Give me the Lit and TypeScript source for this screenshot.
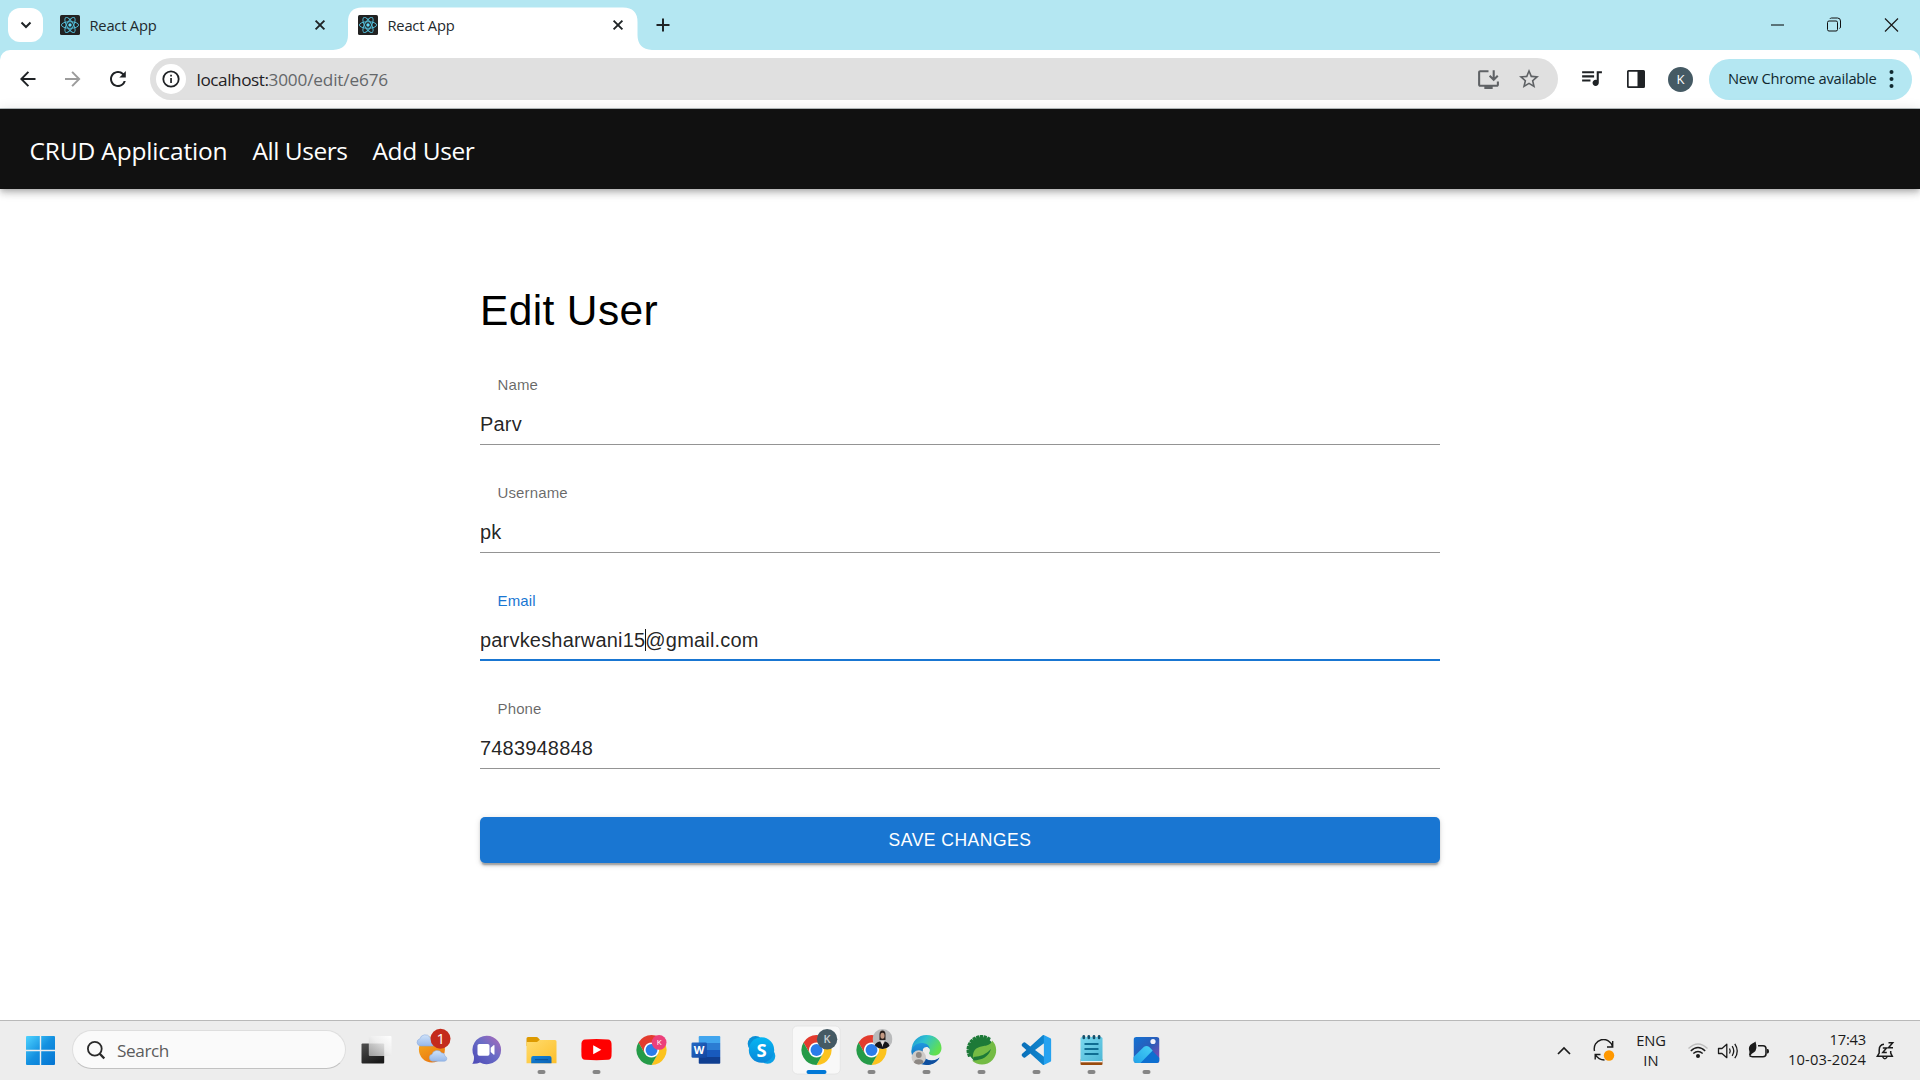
import { LitElement, html, svg, css } from "lit";
import { customElement, property } from "lit/decorators.js";

/** Text run that is tracked so that it fills a given width. */
@customElement("fit-text")
class FitText extends LitElement {
  static styles = css`
    :host { display: inline-block; white-space: nowrap; }
    .run { display: inline-block; white-space: pre; }
  `;
  @property({ type: Number }) w = 0;
  @property() text = "";
  firstUpdated() {
    const run = this.renderRoot.querySelector(".run") as HTMLElement;
    const natural = run.getBoundingClientRect().width;
    if (natural > 0 && this.w > 0) {
      run.style.letterSpacing = `${(this.w - natural) / this.text.length}px`;
    }
  }
  render() {
    return html`<span class="run">${this.text}</span>`;
  }
}

const t = (text: string, w: number) => html`<fit-text text=${text} w=${w}></fit-text>`;

const reactIcon = html`<svg class="fav" width="20" height="20" viewBox="-10 -10 20 20">
  <rect x="-10" y="-10" width="20" height="20" rx="1.6" fill="#222" />
  <g fill="none" stroke="#53bdd8" stroke-width="0.95">
    <ellipse rx="8.6" ry="3.3" />
    <ellipse rx="8.6" ry="3.3" transform="rotate(60)" />
    <ellipse rx="8.6" ry="3.3" transform="rotate(120)" />
  </g>
  <circle r="1.7" fill="#61dafb" />
</svg>`;

const closeIcon = html`<svg width="20" height="20" viewBox="-10 -10 20 20">
  <path d="M-4.4-4.4 4.4 4.4M4.4-4.4-4.4 4.4" stroke="#1f2426" stroke-width="1.9" />
</svg>`;

@customElement("browser-tab")
class BrowserTab extends LitElement {
  static styles = css`
    :host { display: block; }
    .tab { display: flex; align-items: center; width: 289px; height: 50px; box-sizing: border-box; padding: 0 9.5px 0 10px; position: relative; }
    .back { position: absolute; left: -15px; top: 7px; }
    .fav, .label, .close { position: relative; }
    .fav { display: block; }
    .label { flex: 1; margin-left: 9.5px; font-size: 14.7px; line-height: 50px; color: #1f2a2e; }
    .close { display: flex; }
  `;
  @property({ type: Boolean }) active = false;
  render() {
    return html`<div class="tab">
      ${this.active
        ? html`<svg class="back" width="319" height="44" viewBox="0 0 319 44">
            <path d="M0 44V43Q15 42 15 28V15Q15 .5 29 .5H290Q304.500 .5 304.500 15V28Q304.500 42 319 43V44Z" fill="#fff" />
          </svg>`
        : null}
      ${reactIcon}
      <span class="label">${t("React App", 67)}</span>
      <span class="close">${closeIcon}</span>
    </div>`;
  }
}

@customElement("text-field")
class TextField extends LitElement {
  static styles = css`
    :host { display: block; }
    .field { display: flex; flex-direction: column; box-sizing: border-box; height: 108px; padding-top: 38px; }
    .label { height: 20px; line-height: 20px; padding-left: 17.5px; font-size: 15px; letter-spacing: 0.14px; color: rgba(0, 0, 0, 0.6); }
    .value { flex: 1; margin-top: 14px; line-height: 30px; font-size: 20px; letter-spacing: 0.188px; color: rgba(0, 0, 0, 0.87); border-bottom: 1px solid #949494; }
    .focused .label { color: #1976d2; }
    .focused .value { border-bottom: 2px solid #1976d2; }
    .caret { display: inline-block; width: 1px; height: 22px; margin: 0 -0.5px; background: #111; vertical-align: -4px; }
  `;
  @property() label = "";
  @property() before = "";
  @property() after = "";
  @property({ type: Boolean }) focused = false;
  render() {
    return html`<div class="field ${this.focused ? "focused" : ""}">
      <div class="label">${this.label}</div>
      <div class="value">${this.before}${this.focused ? html`<span class="caret"></span>` : null}${this.after}</div>
    </div>`;
  }
}

const chromeLogo = svg`<g transform="translate(-15 -15) scale(.625)">
  <circle cx="24" cy="24" r="12" fill="#fff"/>
  <path fill="#e33b2e" d="M24,12H44.78a24,24,0,0,0-41.56,0L13.608,30l.009-.002A11.985,11.985,0,0,1,24,12Z"/>
  <circle cx="24" cy="24" r="9.5" fill="#2b7de9"/>
  <path fill="#fcc31e" d="M34.391,30.003,24,48A23.994,23.994,0,0,0,44.78,12.003H24l-.003.009A11.985,11.985,0,0,1,34.391,30.003Z"/>
  <path fill="#259b48" d="M13.609,30.003,3.218,12.006A23.994,23.994,0,0,0,24.003,48L34.393,30.003l-.007-.007a11.985,11.985,0,0,1-20.778.007Z"/>
</g>`;

const cloud = svg`<path d="M4 11A3.600 3.600 0 0 1 3.500 4 4.800 4.800 0 0 1 12.300 2.600 3.600 3.600 0 0 1 15.500 6 2.600 2.600 0 0 1 15 11Z" fill="url(#cloud)" stroke="#88a9dc" stroke-width=".5"/>`;

const gear = Array.from({ length: 10 }, (_, i) => svg`<rect x="-1.700" y="-15" width="3.400" height="5" rx=".6" transform=${`rotate(${-112 + i * 16})`} fill="#1d7a38"/>`);

interface Task { name: string; art: unknown; running?: boolean; active?: boolean; }

const tasks: Task[] = [
  { name: "tasks", art: svg`
    <rect x="-15" y="-6.500" width="22.700" height="20" rx="1" fill="url(#dark)"/>
    <rect x="-7.700" y="-14" width="22.700" height="20" rx="1" fill="url(#glass)"/>` },
  { name: "widgets", art: svg`
    <circle cx=".4" cy="-.5" r="13" fill="url(#sun)"/>
    <g transform="translate(-15.500 -15.500) scale(1.130 1.050)">${cloud}</g>
    <g transform="translate(-3.200 .2) scale(1.080 1)">${cloud}</g>
    <circle cx="9" cy="-11.300" r="10" fill="#c42b1c"/>
    <text x="9.300" y="-5.800" text-anchor="middle" font-size="15" fill="#fff">1</text>` },
  { name: "chat", art: svg`
    <path d="M.3-14.200A14.200 14.200 0 1 1-6.500 12.400Q-10 14.200-14.300 13.700-12.300 11.500-12.500 6.500A14.200 14.200 0 0 1 .3-14.200Z" fill="url(#chat)"/>
    <rect x="-9" y="-6" width="12" height="11.800" rx="1.800" fill="#fff"/>
    <path d="M4.200-2.300 7-4.800Q8-5.300 8-4.200V4Q8 5.100 7 4.500L4.200 2Z" fill="#fff"/>` },
  { name: "files", running: true, art: svg`
    <path d="M-15-11.500Q-15-13-13.500-13H-5Q-4-13-3.200-12L-1.500-10V-4H-15Z" fill="#dd9a00"/>
    <path d="M-15-8H-4.500L-2-10H13.500Q15-10 15-8.500V13.300H-15Z" fill="url(#folder)"/>
    <path d="M-10.300 13.300V8Q-10.300 6-8.300 6H8Q10 6 10 8V13.300Z" fill="url(#blue)"/>
    <rect x="-6.500" y="9.200" width="13" height="1" fill="#0a4f96"/>` },
  { name: "video", running: true, art: svg`
    <path d="M-15-6.500Q-14.700-10.200-11.500-10.500 0-11.400 11.500-10.500 14.700-10.200 15-6.500 15.300 0 15 6 14.700 9.500 11.500 9.800 0 10.700-11.500 9.800-14.700 9.500-15 6-15.300 0-15-6.500Z" fill="#f00"/>
    <path d="M-3.300-4.800 4.800-.3-3.300 4.200Z" fill="#fff"/>` },
  { name: "browser", art: svg`${chromeLogo}
    <circle cx="7.600" cy="-7.600" r="7.400" fill="#ec407a"/>
    <text x="7.600" y="-4.800" text-anchor="middle" font-size="8" fill="#fff">K</text>` },
  { name: "word", art: svg`
    <clipPath id="pg"><rect x="-8" y="-14" width="22" height="27.700" rx="1.300"/></clipPath>
    <g clip-path="url(#pg)">
      <rect x="-8" y="-14" width="22" height="7" fill="#41a5ee"/>
      <rect x="-8" y="-7" width="22" height="7" fill="#2b7cd3"/>
      <rect x="-8" y="0" width="22" height="7" fill="#185abd"/>
      <rect x="-8" y="7" width="22" height="7" fill="#103f91"/>
    </g>
    <rect x="-15" y="-7.600" width="15.400" height="15.400" rx="1.300" fill="url(#wd)"/>
    <text x="-7.400" y="4" text-anchor="middle" font-size="11" font-weight="700" fill="#fff">W</text>` },
  { name: "calls", art: svg`
    <circle cx="-6" cy="-6.300" r="7.800" fill="#0a8fd6"/>
    <circle cx="6" cy="6" r="7.800" fill="#0aa0e6"/>
    <circle r="12.700" fill="url(#sky)"/>
    <text x="0" y="6.700" text-anchor="middle" font-size="18.500" font-weight="700" fill="#fff">S</text>` },
  { name: "browser-k", running: true, active: true, art: svg`${chromeLogo}
    <circle cx="10.600" cy="-10.800" r="10.200" fill="#455a64"/>
    <text x="10.400" y="-6.900" text-anchor="middle" font-size="11" font-weight="600" fill="#c9d0d4">K</text>` },
  { name: "browser-p", running: true, art: svg`${chromeLogo}
    <clipPath id="ph"><circle cx="11" cy="-11" r="10"/></clipPath>
    <g clip-path="url(#ph)">
      <rect x="1" y="-21" width="20" height="20" fill="#b9babb"/>
      <path d="M8-10V-16Q8.200-19.500 11-19.500T14-16V-10Z" fill="#2a211e"/>
      <ellipse cx="11" cy="-14.300" rx="2.100" ry="3" fill="#c49a83"/>
      <path d="M3 0V-4Q4-8 8.500-8.500L11-5 13.500-8.500Q18-8 19 0Z" fill="#15161a"/>
      <path d="M9.500-9H12.500L11-3Z" fill="#e7dfdb"/>
    </g>` },
  { name: "edge", running: true, art: svg`
    <path d="M-15 1C-15-9-8-15 0-15 9-15 15-9 15-2 15 3 11.500 5.500 8 5.500 4 5.500 2.200 4 2.600 2.700 4.600.5 3-4-2-4-8-4-12-1-15 3Z" fill="url(#edgeTop)"/>
    <path d="M-15 2C-15-3-10.500-7-5-7-.5-7 3-5 3.200-1 1.500-4-2-3.500-3.500-1-6 3-3 10 5 10.500 8 10.500 11 9.500 13 7.500 10 13 5 15 0 15-8 15-15 9-15 2Z" fill="url(#edgeLow)"/>
    <path d="M-3.500-1C-6 4-2 11 5 10.500 8.500 10.500 11 9.500 13 7.500 10 13 5 15 0 15-8 13-8 3-3.500-1Z" fill="#104f9e"/>
    <circle cx="-7.700" cy="7.500" r="7.200" fill="#cfccc9"/>
    <circle cx="-7.700" cy="5" r="2.900" fill="#8d8884"/>
    <path d="M-12.500 12.700Q-12.200 9.300-7.700 9.300T-2.900 12.700Q-7.700 16.300-12.500 12.700Z" fill="#8d8884"/>` },
  { name: "spring", running: true, art: svg`
    ${gear}
    <circle r="12.800" fill="#1d7a38"/>
    <path d="M10.600-9.500C15.500-5 16.500 4 11 10 5.500 16-4 16-9.500 10.500-6 10.500-3 9-8.500 8.300-9.500-4 1-3.500 5-4.500 8-5.200 10-7 10.600-9.500Z" fill="#74bb44"/>
    <path d="M-8.500 10.500Q6 10 9.500-1Q3 6.500-8 7Z" fill="#1d7a38"/>` },
  { name: "code", running: true, art: svg`<g transform="translate(-15 -15) scale(1.250)">
    <clipPath id="vs"><path d="M23.150 2.587L18.210.21a1.494 1.494 0 0 0-1.705.29l-9.460 8.630-4.120-3.128a.999.999 0 0 0-1.276.057L.327 7.261A1 1 0 0 0 .326 8.740L3.899 12 .326 15.260a1 1 0 0 0 .001 1.479L1.650 17.940a.999.999 0 0 0 1.276.057l4.120-3.128 9.460 8.630a1.492 1.492 0 0 0 1.704.29l4.942-2.377A1.500 1.500 0 0 0 24 20.060V3.939a1.500 1.500 0 0 0-.85-1.352z"/></clipPath>
    <g clip-path="url(#vs)">
      <path fill="url(#vsg)" fill-rule="evenodd" d="M0 0H18V24H0ZM18 6.552 10.826 12 18 17.448Z"/>
      <rect x="17.900" width="6.100" height="24" fill="#25a2f0"/>
    </g></g>` },
  { name: "notes", running: true, art: svg`
    <path d="M-11 9H11V14Q11 15 10 15H-10Q-11 15-11 14Z" fill="#9a4a0c"/>
    <path d="M-11 9H11V12.300H-11Z" fill="#f3f3f3"/>
    <path d="M-11-11.500Q-11-13-9.500-13H9.500Q11-13 11-11.500V11H-11Z" fill="url(#note)"/>
    <g fill="#14506c"><rect x="-9" y="-15" width="2.600" height="4.200" rx="1.300"/><rect x="-4" y="-15" width="2.600" height="4.200" rx="1.300"/><rect x="1.200" y="-15" width="2.600" height="4.200" rx="1.300"/><rect x="6.300" y="-15" width="2.600" height="4.200" rx="1.300"/></g>
    <g fill="#0f6d92"><rect x="-7" y="-7" width="14" height="2"/><rect x="-7" y="-2" width="14" height="2"/><rect x="-7" y="3" width="14" height="2"/></g>` },
  { name: "photos", running: true, art: svg`
    <clipPath id="pc"><rect x="-13" y="-13" width="26" height="26" rx="3"/></clipPath>
    <g clip-path="url(#pc)">
      <rect x="-13" y="-13" width="26" height="26" fill="url(#photo)"/>
      <path d="M-7 14 4-1 13 8V14Z" fill="#0d6fd0"/>
      <path d="M-14 8-2.500-3.200Q0-5 2.500-3.200L6.200.6-7 14H-14Z" fill="url(#hill)"/>
    </g>
    <circle cx="6.500" cy="-8.500" r="2.600" fill="#f2f2fa"/>` },
];

const gradients = svg`<defs>
  <linearGradient id="dark" x1="0" y1="0" x2=".6" y2="1"><stop stop-color="#505050"/><stop offset="1" stop-color="#1b1b1b"/></linearGradient>
  <linearGradient id="glass" x1="1" y1="0" x2="0" y2="1"><stop stop-color="#fff"/><stop offset=".45" stop-color="#f0f0f0" stop-opacity=".85"/><stop offset="1" stop-color="#c4c4c4" stop-opacity=".75"/></linearGradient>
  <linearGradient id="sun" x1="0" y1="0" x2=".5" y2="1"><stop stop-color="#f9b21e"/><stop offset="1" stop-color="#ea7a12"/></linearGradient>
  <linearGradient id="cloud" x1="0" y1="0" x2="0" y2="1"><stop stop-color="#cfe2f9"/><stop offset="1" stop-color="#97b8ea"/></linearGradient>
  <linearGradient id="chat" x1="1" y1="0" x2="0" y2="1"><stop stop-color="#b06ab8"/><stop offset=".45" stop-color="#6a6cc6"/><stop offset="1" stop-color="#4c49b6"/></linearGradient>
  <linearGradient id="folder" x1="0" y1="0" x2="1" y2="1"><stop stop-color="#ffdc6e"/><stop offset="1" stop-color="#fdbf2a"/></linearGradient>
  <linearGradient id="blue" x1="0" y1="0" x2="1" y2="1"><stop stop-color="#1283d9"/><stop offset="1" stop-color="#0b62b4"/></linearGradient>
  <linearGradient id="wd" x1="0" y1="0" x2="1" y2="1"><stop stop-color="#2368c4"/><stop offset="1" stop-color="#1347a1"/></linearGradient>
  <linearGradient id="sky" x1="0" y1="0" x2="0" y2="1"><stop stop-color="#06b6f2"/><stop offset="1" stop-color="#0a86d8"/></linearGradient>
  <linearGradient id="edgeTop" x1="0" y1="0" x2="1" y2=".5"><stop stop-color="#1c8fd8"/><stop offset=".45" stop-color="#2fc2cf"/><stop offset="1" stop-color="#62e04f"/></linearGradient>
  <linearGradient id="edgeLow" x1="0" y1="0" x2="0" y2="1"><stop stop-color="#1f97de"/><stop offset="1" stop-color="#1163b5"/></linearGradient>
  <linearGradient id="vsg" x1="0" y1="0" x2="1" y2="0"><stop stop-color="#0a6fb8"/><stop offset="1" stop-color="#0f86d0"/></linearGradient>
  <linearGradient id="note" x1="0" y1="0" x2="1" y2="1"><stop stop-color="#7cd9ef"/><stop offset="1" stop-color="#4db7d6"/></linearGradient>
  <linearGradient id="photo" x1="0" y1="0" x2="1" y2="1"><stop stop-color="#1273d4"/><stop offset=".5" stop-color="#2a5cb8"/><stop offset="1" stop-color="#9447b4"/></linearGradient>
  <linearGradient id="hill" x1="0" y1="1" x2="1" y2="0"><stop stop-color="#1f9fe8"/><stop offset="1" stop-color="#48d2f6"/></linearGradient>
  <linearGradient id="win" gradientUnits="userSpaceOnUse" x1="0" y1="0" x2="29" y2="29"><stop stop-color="#4fd3ff"/><stop offset=".5" stop-color="#1390e0"/><stop offset="1" stop-color="#0474d2"/></linearGradient>
</defs>`;

@customElement("app-root")
class AppRoot extends LitElement {
  static styles = css`
    :host { display: block; width: 1920px; height: 1080px; overflow: hidden; font-family: "Open Sans", "Noto Sans", sans-serif; background: #fff; }
    svg { display: block; flex: none; }
    .screen { display: flex; flex-direction: column; width: 1920px; height: 1080px; }

    .strip { display: flex; align-items: center; height: 50px; background: #b4e7f2; }
    .picker { display: flex; align-items: center; justify-content: center; width: 35px; height: 34px; margin-left: 8px; border-radius: 12px; background: #fff; }
    .tab-one { margin-left: 7px; }
    .tab-two { margin-left: 9px; }
    .plus { margin-left: 15.500px; }
    .window { display: flex; gap: 38px; margin-left: auto; margin-right: 19px; }

    .under { background: #b4e7f2; height: 58px; }
    .toolbar { display: flex; align-items: center; height: 58px; box-sizing: border-box; padding: 0 8px 0 16px; border-radius: 10px 10px 0 0; background: #fff; }
    .nav-icons { display: flex; gap: 21px; }
    .omni { display: flex; align-items: center; width: 1408px; height: 42px; margin-left: 20px; border-radius: 21px; background: #e0e0e0; box-sizing: border-box; padding: 0 17px 0 6px; }
    .info { display: flex; align-items: center; justify-content: center; width: 30px; height: 30px; border-radius: 50%; background: #fff; }
    .url { flex: 1; margin-left: 10.500px; padding-top: 1px; font-size: 17.200px; line-height: 41px; color: #1f2225; }
    .path { color: #64676a; }
    .star { margin-left: 16px; }
    .media { margin-left: 21px; }
    .panel { margin-left: 22px; }
    .avatar { width: 25px; height: 25px; margin-left: 22px; border-radius: 50%; background: #455a64; color: #fff; font-size: 13px; line-height: 25px; text-align: center; }
    .update { display: flex; align-items: center; width: 203px; height: 41px; box-sizing: border-box; margin-left: auto; padding: 0 10.500px 0 19px; border-radius: 21px; background: #b4e7f2; font-size: 14.700px; line-height: 39px; color: #10282f; }
    .update-label { flex: 1; padding-bottom: 2px; }

    .edge { height: 1px; background: #b6bdbf; }
    .appbar { display: flex; align-items: center; height: 80px; box-sizing: border-box; padding: 4px 0 0 29.500px; gap: 25px; background: #111; color: #fff; font-size: 24.500px; line-height: 40px; box-shadow: 0 2.500px 5px -1.250px rgba(0,0,0,.2), 0 5px 6.250px rgba(0,0,0,.14), 0 1.250px 12.500px rgba(0,0,0,.12); }

    .page { flex: 1; font-family: "Liberation Sans", Arial, sans-serif; }
    .form { width: 960px; margin: 0 auto; padding-top: 95px; }
    .title { margin: 0; height: 53px; line-height: 54px; font-size: 42.500px; font-weight: 400; letter-spacing: 0.36px; color: #000; }
    .save { display: block; width: 960px; height: 46px; margin-top: 48px; padding: 0; border: 0; border-radius: 5px; background: #1976d2; color: #fff; font: 500 17.500px/46px "Liberation Sans", Arial, sans-serif; letter-spacing: 0.5px; box-shadow: 0 3.750px 1.250px -2.500px rgba(0,0,0,.2), 0 2.500px 2.500px rgba(0,0,0,.14), 0 1.250px 6.250px rgba(0,0,0,.12); }

    .taskbar { display: flex; align-items: center; height: 60px; box-sizing: border-box; border-top: 1px solid #b9b9b9; background: #ededed; color: #1b1b1b; }
    .start { margin-left: 26px; }
    .search { display: flex; align-items: center; width: 274px; height: 39.500px; box-sizing: border-box; margin: 0 3px 2px 17px; padding-left: 13.500px; border: 1px solid #dedede; border-bottom-color: #c2c2c2; border-radius: 20px; background: #fafafa; }
    .search-label { margin-left: 12.500px; padding-top: 3px; font-size: 17.200px; line-height: 36px; color: #5c5c5c; }
    .slot { display: flex; justify-content: center; width: 55px; height: 59px; }
    .tray { display: flex; align-items: center; margin-left: auto; font-size: 14.700px; line-height: 20px; }
    .sync { margin-left: 20px; }
    .lang { width: 36px; text-align: center; margin-left: 17.500px; padding-bottom: 2px; }
    .clock { text-align: right; margin-left: 17px; padding-bottom: 4px; }
    .row { height: 20px; }
    .tray-icons { margin-left: 18px; }
    .bell { margin: 0 25px 0 10px; }
  `;

  private renderStrip() {
    return html`<div class="strip">
      <div class="picker"><svg width="14" height="14" viewBox="0 0 14 14"><path d="M2.500 4.500 7 9 11.500 4.500" fill="none" stroke="#1f2426" stroke-width="2"/></svg></div>
      <browser-tab class="tab-one"></browser-tab>
      <browser-tab class="tab-two" active></browser-tab>
      <svg class="plus" width="20" height="20" viewBox="-10 -10 20 20"><path d="M-6.500 0H6.500M0-6.500V6.500" stroke="#1f2426" stroke-width="2"/></svg>
      <div class="window">
        <svg width="19" height="19" viewBox="0 0 19 19"><path d="M3 9H16" stroke="#000" stroke-width="1"/></svg>
        <svg width="19" height="19" viewBox="0 0 19 19"><rect x="2.500" y="5" width="10" height="10" rx="1.500" fill="none" stroke="#111"/><path d="M5 3V2.800Q5.300 2.100 6.500 2H12.500Q15.500 2 15.500 5V11Q15.400 12.200 14.500 12.500" fill="none" stroke="#111"/></svg>
        <svg width="19" height="19" viewBox="0 0 19 19"><path d="M3 2.500 16 15.500M16 2.500 3 15.500" stroke="#1a1a1a" stroke-width="1.200"/></svg>
      </div>
    </div>`;
  }

  private renderToolbar() {
    return html`<div class="under"><div class="toolbar">
      <div class="nav-icons">
        <svg width="24" height="24" viewBox="0 0 24 24"><path fill="#1f2225" d="M19.500 11H7.700l5.400-5.400L11.700 4.200 4 12l7.700 7.800 1.400-1.400L7.700 13h11.800z"/></svg>
        <svg width="24" height="24" viewBox="0 0 24 24"><path fill="#9c9c9c" d="M4 11H15.800l-5.400-5.400 1.400-1.400L19.500 12l-7.700 7.800-1.400-1.400L15.800 13H4z"/></svg>
        <svg width="24" height="24" viewBox="0 0 24 24"><path fill="#1f2225" d="M17.650 6.350A7.958 7.958 0 0 0 12 4c-4.420 0-7.990 3.580-7.990 8s3.570 8 7.990 8c3.730 0 6.840-2.550 7.730-6h-2.080A5.990 5.990 0 0 1 12 18c-3.310 0-6-2.690-6-6s2.690-6 6-6c1.660 0 3.140.69 4.220 1.780L13.300 10.600h6.500V4l-2.150 2.350z"/></svg>
      </div>
      <div class="omni">
        <div class="info"><svg width="20" height="20" viewBox="0 0 20 20"><circle cx="10" cy="10" r="7.700" fill="none" stroke="#1f2225" stroke-width="1.800"/><path d="M9.200 9h1.700v5H9.200zM9.200 5.800h1.700v1.700H9.200z" fill="#1f2225"/></svg></div>
        <span class="url">${t("localhost:", 72)}<span class="path">${t("3000/edit/e676", 119.5)}</span></span>
        <svg width="25" height="25" viewBox="0 0 24 24"><path fill="#5f6265" d="M20 17H4V5h8V3H4c-1.100 0-2 .9-2 2v12c0 1.100.9 2 2 2h4v2h8v-2h4c1.100 0 2-.9 2-2v-3h-2v3z M17 13.600l4.600-4.600-1.410-1.410L18 9.770V3h-2v6.770l-2.190-2.180L12.400 9l4.600 4.600z"/></svg>
        <svg class="star" width="24" height="24" viewBox="0 0 24 24"><path fill="#5f6265" d="M22 9.240l-7.190-.62L12 2 9.190 8.630 2 9.240l5.460 4.730L5.820 21 12 17.270 18.180 21l-1.630-7.030L22 9.240zM12 15.400l-3.760 2.270 1-4.280-3.320-2.880 4.380-.38L12 6.100l1.710 4.040 4.380.38-3.320 2.880 1 4.280L12 15.400z"/></svg>
      </div>
      <svg class="media" width="25" height="25" viewBox="0 0 24 24"><path fill="#1f2225" d="M14.500 4H3v2h11.500V4zm0 4H3v2h11.500V8zM3 14h8v-2H3v2zM17 4v8.380c-.31-.11-.65-.18-1-.18-1.660 0-3 1.340-3 3s1.340 3 3 3 3-1.340 3-3V6h3V4h-5z"/></svg>
      <svg class="panel" width="20" height="20" viewBox="0 0 20 20"><path fill="#1f2225" fill-rule="evenodd" d="M2.500 1H17.500Q19 1 19 2.500V17.500Q19 19 17.500 19H2.500Q1 19 1 17.500V2.500Q1 1 2.500 1ZM2.700 2.700V17.300H11.500V2.700Z"/></svg>
      <div class="avatar">K</div>
      <div class="update"><span class="update-label">${t("New Chrome available", 148.5)}</span><svg width="21" height="22" viewBox="0 0 21 22"><g fill="#10282f"><circle cx="10.500" cy="4" r="2"/><circle cx="10.500" cy="11" r="2"/><circle cx="10.500" cy="18" r="2"/></g></svg></div>
    </div></div>`;
  }

  private renderTask(task: Task) {
    return html`<div class="slot"><svg width="49" height="59" viewBox="-24.500 -29 49 59">
      ${gradients}
      ${task.active ? svg`<rect x="-24.200" y="-24" width="48" height="48" rx="5" fill="#f8f8f8" stroke="#e2e2e2" stroke-width=".8"/>` : null}
      ${task.art}
      ${task.active
        ? svg`<rect x="-10" y="20" width="20" height="4" rx="2" fill="#0078d7"/>`
        : task.running ? svg`<rect x="-4" y="20" width="8" height="4" rx="2" fill="#868686"/>` : null}
    </svg></div>`;
  }

  private renderTaskbar() {
    return html`<div class="taskbar">
      <svg class="start" width="29" height="29" viewBox="0 0 29 29">${gradients}<g fill="url(#win)"><path d="M1 0H13.800V13.800H0V1Q0 0 1 0Z"/><path d="M15.200 0H28Q29 0 29 1V13.800H15.200Z"/><path d="M0 15.200H13.800V29H1Q0 29 0 28Z"/><path d="M15.200 15.200H29V28Q29 29 28 29H15.200Z"/></g></svg>
      <div class="search"><svg width="18" height="20" viewBox="0 0 18 20"><circle cx="7.800" cy="8.800" r="6.900" fill="none" stroke="#2a2a2a" stroke-width="1.800"/><path d="M12.500 13.500 17.300 18.500" stroke="#2a2a2a" stroke-width="2.400"/></svg><span class="search-label">${t("Search", 52)}</span></div>
      ${tasks.map((task) => this.renderTask(task))}
      ${this.renderTray()}
    </div>`;
  }

  private renderTray() {
    return html`<div class="tray">
      <svg width="16" height="12" viewBox="0 0 16 12"><path d="M2 9 8 3 14 9" fill="none" stroke="#1b1b1b" stroke-width="1.700"/></svg>
      <svg class="sync" width="24" height="24" viewBox="0 0 24 24"><g fill="none" stroke="#1b1b1b" stroke-width="1.400"><path d="M2.500 12A9 9 0 0 1 20.500 7.500M20.700 2V8H15"/><path d="M3.200 20.500V15.500H8.500M3.200 15.700Q6.500 21 12.500 21"/></g><circle cx="17" cy="16.500" r="5.200" fill="#ff9800"/></svg>
      <div class="lang"><div class="row">${t("ENG", 29.5)}</div><div class="row">${t("IN", 15.5)}</div></div>
      <svg class="tray-icons" width="84" height="24" viewBox="0 0 84 24">
        <g fill="none" stroke="#1b1b1b" stroke-width="1.400">
          <path d="M1.500 9.500Q11 .5 20.500 9.500" stroke="#bdbdbd"/>
          <path d="M3.800 12Q11 5 18.200 12"/><path d="M6.300 14.600Q11 10.200 15.700 14.600"/>
        </g>
        <circle cx="11" cy="17" r="2" fill="#1b1b1b"/>
        <g fill="none" stroke="#1b1b1b" stroke-width="1.300" stroke-linejoin="round">
          <path d="M31.500 9.500H35L39.800 5.300V18.700L35 14.500H31.500Z"/><path d="M42.500 9.500Q44 12 42.500 14.500M45.200 7.200Q48.300 12 45.200 16.800M47.800 4.800Q52.700 12 47.800 19.200"/>
          <path d="M71 6.700H76Q79 6.700 79 9.700V14.700Q79 17.700 76 17.700H65.500Q63.500 17.700 62.500 16.500" stroke-width="1.600"/>
        </g>
        <path d="M80 10H80.500Q82 10 82 12.200T80.500 14.500H80Z" fill="#1b1b1b"/>
        <path d="M68.500 2.500Q71 10.500 67 13.300 64.500 14.300 63.300 16.800L62 16Q62.300 14.300 62.500 13 60.300 7 65.300 4.500 67.500 3.700 68.500 2.500Z" fill="#1b1b1b"/>
      </svg>
      <div class="clock"><div class="row">${t("17:43", 36.5)}</div><div class="row">${t("10-03-2024", 78)}</div></div>
      <svg class="bell" width="19" height="22" viewBox="0 0 19 22"><g fill="none" stroke="#1b1b1b" stroke-width="1.500"><path d="M8 4.300Q3.200 4.800 3.200 10V13L1.300 16.300H16.300L14.700 13V11"/><path d="M6.500 16.500Q8.800 21 11.300 16.500"/><path d="M6.800 8H10.500L6.800 12.500H10.800"/><path d="M12.500 2.700H16.700L12.500 7.700H17"/></g></svg>
    </div>`;
  }

  render() {
    return html`<div class="screen">
      ${this.renderStrip()}
      ${this.renderToolbar()}
      <div class="edge"></div>
      <div class="appbar">${t("CRUD Application", 198)}${t("All Users", 95)}${t("Add User", 102)}</div>
      <div class="page"><div class="form">
        <h1 class="title">Edit User</h1>
        <text-field label="Name" before="Parv"></text-field>
        <text-field label="Username" before="pk"></text-field>
        <text-field label="Email" before="parvkesharwani15" after="@gmail.com" focused></text-field>
        <text-field label="Phone" before="7483948848"></text-field>
        <button class="save">SAVE CHANGES</button>
      </div></div>
      ${this.renderTaskbar()}
    </div>`;
  }
}
